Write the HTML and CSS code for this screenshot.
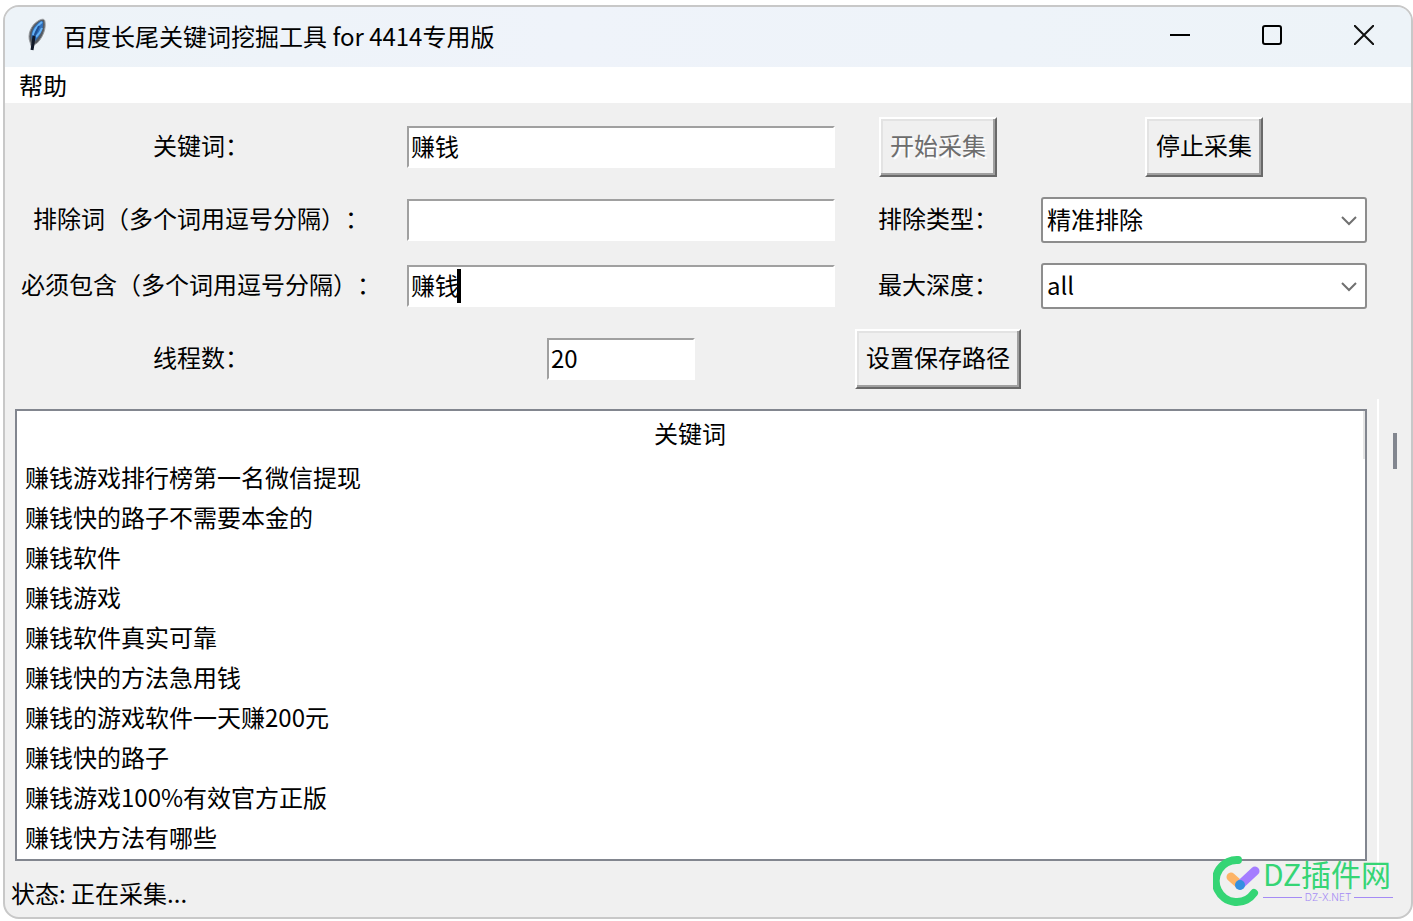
FILE: index.html
```html
<!DOCTYPE html>
<html lang="zh-CN">
<head>
    <meta charset="UTF-8">
    <title>百度长尾关键词挖掘工具</title>
    <link rel="stylesheet" href="styles.css">
</head>
<body>
    <div class="window">
        <!-- Title bar -->
        <header class="titlebar">
            <svg class="feather" width="24" height="36" viewBox="0 0 24 36">
                <path d="M7 31 L5 24 C2 17 6 7 13 3 C16 1 20 0 20 4 C21 11 18 18 14 23 C12 26 10 26 9 27 Z" fill="#555b63" stroke="#9a9c9f" stroke-width="1"/>
                <path d="M7 22 C5 15 9 8 14 4 C17 2 19 3 18 6 C18 13 14 19 10 23 Z" fill="#2f70bd"/>
                <path d="M8 17 C9 11 13 7 17 4 M11 19 C14 16 16 13 17 10" fill="none" stroke="#65b2f5" stroke-width="2"/>
                <path d="M14 8 C12 13 9 18 8 22" fill="none" stroke="#214f91" stroke-width="2"/>
                <path d="M9 18 L8 26 L7 32" fill="none" stroke="#101828" stroke-width="3"/>
            </svg>
            <h1>百度长尾关键词挖掘工具 for 4414专用版</h1>
            <div class="window-buttons">
                <button type="button" aria-label="最小化">
                    <svg width="20" height="20"><path d="M0 10H20" stroke="#000" stroke-width="2"/></svg>
                </button>
                <button type="button" aria-label="最大化">
                    <svg width="20" height="20"><rect x="1" y="1" width="18" height="18" rx="2" fill="none" stroke="#000" stroke-width="2"/></svg>
                </button>
                <button type="button" aria-label="关闭">
                    <svg width="20" height="20"><path d="M0 0L20 20M20 0L0 20" stroke="#111" stroke-width="2"/></svg>
                </button>
            </div>
        </header>

        <nav class="menubar">
            <button type="button">帮助</button>
        </nav>

        <!-- Search settings -->
        <form class="settings">
            <label for="keyword">关键词：</label>
            <input type="text" id="keyword" value="赚钱">
            <button type="button" disabled>开始采集</button>
            <button type="button">停止采集</button>

            <label for="exclude">排除词（多个词用逗号分隔）：</label>
            <input type="text" id="exclude">
            <label for="excludeType">排除类型：</label>
            <div class="combo">
                <select id="excludeType">
                    <option>精准排除</option>
                </select>
                <svg width="16" height="10"><path d="M1 1L8 8L15 1" fill="none" stroke="#707070" stroke-width="2"/></svg>
            </div>

            <label for="include">必须包含（多个词用逗号分隔）：</label>
            <div class="field">
                <input type="text" id="include" value="赚钱">
                <span class="caret"></span>
            </div>
            <label for="depth">最大深度：</label>
            <div class="combo">
                <select id="depth">
                    <option>all</option>
                </select>
                <svg width="16" height="10"><path d="M1 1L8 8L15 1" fill="none" stroke="#707070" stroke-width="2"/></svg>
            </div>

            <label for="threads">线程数：</label>
            <input type="text" id="threads" class="short" value="20">
            <button type="button">设置保存路径</button>
        </form>

        <!-- Collected keywords -->
        <main class="results">
            <div class="tree">
                <table>
                    <thead>
                        <tr><th>关键词</th></tr>
                    </thead>
                    <tbody>
                        <tr><td>赚钱游戏排行榜第一名微信提现</td></tr>
                        <tr><td>赚钱快的路子不需要本金的</td></tr>
                        <tr><td>赚钱软件</td></tr>
                        <tr><td>赚钱游戏</td></tr>
                        <tr><td>赚钱软件真实可靠</td></tr>
                        <tr><td>赚钱快的方法急用钱</td></tr>
                        <tr><td>赚钱的游戏软件一天赚200元</td></tr>
                        <tr><td>赚钱快的路子</td></tr>
                        <tr><td>赚钱游戏100%有效官方正版</td></tr>
                        <tr><td>赚钱快方法有哪些</td></tr>
                    </tbody>
                </table>
            </div>
            <div class="scrollbar"><div class="thumb"></div></div>
        </main>

        <footer class="status">状态: 正在采集...</footer>

        <div class="watermark">
            <svg width="50" height="52" viewBox="0 0 50 52">
                <path d="M25 5 A21 21 0 1 0 41 38" fill="none" stroke="#35d575" stroke-width="8" stroke-linecap="round"/>
                <path d="M18 22L27 30" stroke="#fdb366" stroke-width="9" stroke-linecap="round"/>
                <path d="M42 16L27 30" stroke="#a47dff" stroke-width="9" stroke-linecap="round"/>
                <circle cx="27" cy="30" r="5" fill="#3490e0"/>
            </svg>
            <div class="brand">
                <div class="brand-name">DZ插件网</div>
                <div class="brand-site">DZ-X.NET</div>
            </div>
        </div>
    </div>
</body>
</html>
```

FILE: styles.css
```css
* {
    box-sizing: border-box;
}
body {
    margin: 0;
    padding: 5px 0 2px 3px;
    min-height: 100vh;
    display: flex;
    background: #fff;
    color: #000;
    font-family: "Noto Sans CJK SC", sans-serif;
    font-size: 24px;
    line-height: 36px;
    text-spacing-trim: space-all;
}
button, input, select {
    font: inherit;
    color: inherit;
}
.window {
    position: relative;
    flex: 1;
    display: flex;
    flex-direction: column;
    border: 2px solid #c8c8c8;
    border-radius: 16px;
    background: #f0f0f0;
    overflow: hidden;
}

/* Title bar */
.titlebar {
    display: flex;
    align-items: center;
    height: 60px;
    padding: 0 1px 2px 20px;
    background: linear-gradient(to right, #edf3f8, #eff3fa 40%, #edf3f8);
}
.titlebar h1 {
    flex: 1;
    margin: 0 0 0 14px;
    font-size: 24px;
    font-weight: 400;
}
.window-buttons {
    display: flex;
    height: 56px;
    align-self: flex-start;
}
.window-buttons button {
    display: flex;
    align-items: center;
    justify-content: center;
    width: 92px;
    padding: 0;
    border: none;
    background: none;
}

.menubar {
    display: flex;
    height: 36px;
    padding: 0 14px;
    background: #fff;
}
.menubar button {
    padding: 0;
    border: none;
    background: none;
}

/* Settings form */
.settings {
    display: grid;
    grid-template-columns: 372px 21fr 166px 16fr;
    grid-template-rows: 60px 46px 46px 60px;
    gap: 20px;
    align-items: center;
    justify-items: center;
    padding: 14px 44px 10px 10px;
}
.settings label {
    padding-bottom: 4px;
    white-space: nowrap;
}
.settings input {
    width: 100%;
    height: 42px;
    padding: 0 2px 4px;
    border: 2px solid #fff;
    border-top-color: #a0a0a0;
    border-left-color: #a0a0a0;
    background: #fff;
    outline: none;
}
.settings .short {
    width: 148px;
}
.settings button {
    height: 60px;
    padding: 0 9px 4px;
    border: 2px solid #696969;
    border-top-color: #fff;
    border-left-color: #fff;
    background: #f0f0f0;
    box-shadow: inset -2px -2px #a0a0a0, inset 2px 2px #e3e3e3;
    white-space: nowrap;
}
.settings button:disabled {
    color: #6d6d6d;
    text-shadow: 2px 2px #fff;
}
.field {
    position: relative;
    width: 100%;
    height: 42px;
}
.field input {
    display: block;
}
.caret {
    position: absolute;
    top: 4px;
    left: 50px;
    width: 4px;
    height: 34px;
    background: #000;
}
.combo {
    position: relative;
    width: 100%;
}
.combo select {
    display: block;
    width: 100%;
    height: 46px;
    padding: 0 40px 2px 4px;
    border: 2px solid #8d8d8d;
    border-radius: 3px;
    background: #fff;
    appearance: none;
}
.combo svg {
    position: absolute;
    top: 19px;
    right: 10px;
    pointer-events: none;
}

/* Result list */
.results {
    flex: 1;
    display: flex;
    padding-left: 10px;
}
.tree {
    flex: 1;
    margin: 10px 10px 10px 0;
    border: 2px solid #82868f;
    background: #fff;
}
.tree table {
    width: 100%;
    border-collapse: separate;
    border-spacing: 0;
}
.tree th {
    height: 48px;
    padding: 0 0 4px;
    border-right: 2px solid #e5e5e5;
    font-weight: 400;
}
.tree td {
    height: 40px;
    padding: 0 8px 4px;
}
.scrollbar {
    width: 34px;
    padding: 34px 0 0 14px;
    border-left: 2px solid #fff;
}
.thumb {
    width: 4px;
    height: 36px;
    background: #82868f;
}

.status {
    height: 46px;
    padding: 0 6px;
    line-height: 44px;
}

/* Site mark over the bottom right corner */
.watermark {
    position: absolute;
    right: 18px;
    bottom: 10px;
    display: flex;
}
.brand {
    width: 130px;
}
.brand-name {
    color: #35d575;
    font-size: 30px;
    font-weight: 400;
    line-height: 36px;
    white-space: nowrap;
}
.brand-site {
    display: flex;
    align-items: center;
    gap: 3px;
    color: #a58bf5;
    font-family: "Inter", sans-serif;
    font-size: 10px;
    font-weight: 300;
    line-height: 12px;
}
.brand-site::before,
.brand-site::after {
    content: "";
    flex: 1;
    height: 1px;
    background: #a58bf5;
}
```
